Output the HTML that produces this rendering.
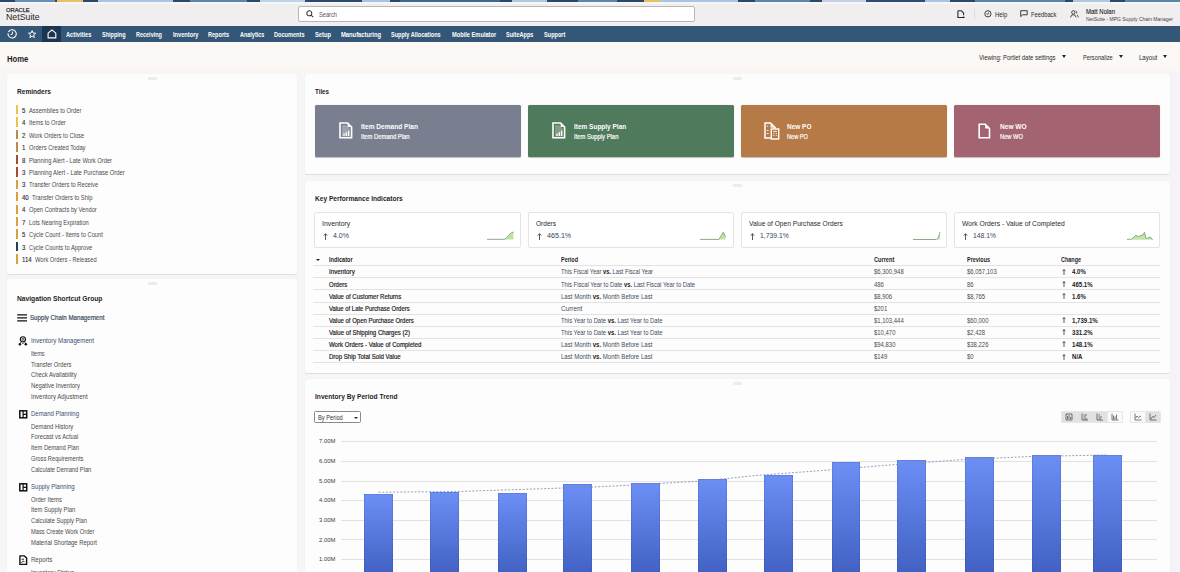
<!DOCTYPE html>
<html><head><meta charset="utf-8"><style>
html,body{margin:0;padding:0;width:1180px;height:572px;overflow:hidden;background:#f7f5f5}
body{position:relative;font-family:"Liberation Sans",sans-serif}
.t{position:absolute;white-space:nowrap;line-height:normal;transform-origin:0 0}
</style></head><body>
<div style="position:absolute;left:0px;top:0;width:15px;height:2px;background:#2a4868"></div>
<div style="position:absolute;left:15px;top:0;width:40px;height:2px;background:#6a8fb8"></div>
<div style="position:absolute;left:55px;top:0;width:2px;height:2px;background:#2a4868"></div>
<div style="position:absolute;left:57px;top:0;width:26px;height:2px;background:#e8c068"></div>
<div style="position:absolute;left:83px;top:0;width:15px;height:2px;background:#2a4868"></div>
<div style="position:absolute;left:98px;top:0;width:75px;height:2px;background:#a8c4e0"></div>
<div style="position:absolute;left:173px;top:0;width:17px;height:2px;background:#2a4868"></div>
<div style="position:absolute;left:190px;top:0;width:57px;height:2px;background:#5c88a8"></div>
<div style="position:absolute;left:247px;top:0;width:13px;height:2px;background:#2a4868"></div>
<div style="position:absolute;left:260px;top:0;width:45px;height:2px;background:#c0d4e8"></div>
<div style="position:absolute;left:305px;top:0;width:57px;height:2px;background:#2e4a6a"></div>
<div style="position:absolute;left:362px;top:0;width:28px;height:2px;background:#a8c4e0"></div>
<div style="position:absolute;left:390px;top:0;width:10px;height:2px;background:#2a4868"></div>
<div style="position:absolute;left:400px;top:0;width:100px;height:2px;background:#3f6892"></div>
<div style="position:absolute;left:500px;top:0;width:12px;height:2px;background:#2a4868"></div>
<div style="position:absolute;left:512px;top:0;width:35px;height:2px;background:#b0c8e0"></div>
<div style="position:absolute;left:547px;top:0;width:31px;height:2px;background:#2a4868"></div>
<div style="position:absolute;left:578px;top:0;width:39px;height:2px;background:#5c88a8"></div>
<div style="position:absolute;left:617px;top:0;width:27px;height:2px;background:#2a4868"></div>
<div style="position:absolute;left:644px;top:0;width:16px;height:2px;background:#e8c068"></div>
<div style="position:absolute;left:660px;top:0;width:78px;height:2px;background:#a8c4e0"></div>
<div style="position:absolute;left:738px;top:0;width:17px;height:2px;background:#2a4868"></div>
<div style="position:absolute;left:755px;top:0;width:55px;height:2px;background:#5c88a8"></div>
<div style="position:absolute;left:810px;top:0;width:12px;height:2px;background:#2a4868"></div>
<div style="position:absolute;left:822px;top:0;width:44px;height:2px;background:#c8d0e8"></div>
<div style="position:absolute;left:866px;top:0;width:59px;height:2px;background:#2e4a78"></div>
<div style="position:absolute;left:925px;top:0;width:25px;height:2px;background:#a8c4e0"></div>
<div style="position:absolute;left:950px;top:0;width:25px;height:2px;background:#2a4868"></div>
<div style="position:absolute;left:975px;top:0;width:90px;height:2px;background:#5a86a8"></div>
<div style="position:absolute;left:1065px;top:0;width:8px;height:2px;background:#2a4868"></div>
<div style="position:absolute;left:1073px;top:0;width:37px;height:2px;background:#b0c8e0"></div>
<div style="position:absolute;left:1110px;top:0;width:15px;height:2px;background:#2a4868"></div>
<div style="position:absolute;left:1125px;top:0;width:55px;height:2px;background:#5a86a8"></div>
<div style="position:absolute;left:0;top:2px;width:1180px;height:24px;background:#f0eeee"></div>
<div style="position:absolute;left:0;top:2px;width:1180px;height:2px;background:#f7f6f6"></div>
<div style="position:absolute;left:298px;top:6px;width:395px;height:14px;background:#fff;border:1px solid #b9b5b5;border-radius:2px"></div>
<svg style="position:absolute;left:305.5px;top:9.8px" width="8" height="8" viewBox="0 0 8 8"><circle cx="3.3" cy="3.3" r="2.5" fill="none" stroke="#3a3a3a" stroke-width="1.05"/><line x1="5.1" y1="5.1" x2="7.2" y2="7.2" stroke="#3a3a3a" stroke-width="1.1"/></svg>
<svg style="position:absolute;left:957px;top:9.6px" width="8" height="8.5" viewBox="0 0 8 8.5"><path d="M0.9 0.7 H4.3 L6.6 3 V5.2 M6 7.6 H0.9 V0.7" fill="none" stroke="#2a2a2a" stroke-width="1.1"/><circle cx="6.7" cy="7.3" r="0.9" fill="#111"/></svg>
<div style="position:absolute;left:973.5px;top:8.5px;width:0.8px;height:10.5px;background:#dcdada"></div>
<svg style="position:absolute;left:983.5px;top:9.8px" width="8" height="8" viewBox="0 0 8 8"><circle cx="3.9" cy="3.8" r="3.1" fill="none" stroke="#333" stroke-width="0.95"/><path d="M2.9 3.3 L3.8 4.6 L4.7 2.4" fill="none" stroke="#333" stroke-width="0.8"/></svg>
<svg style="position:absolute;left:1019.7px;top:10px" width="8" height="7.5" viewBox="0 0 8 7.5"><path d="M0.7 0.7 H7.2 V4.8 H2.6 L0.7 6.6 Z" fill="none" stroke="#333" stroke-width="0.95" stroke-linejoin="round"/></svg>
<svg style="position:absolute;left:1069.5px;top:10px" width="9" height="8" viewBox="0 0 9 8"><circle cx="3.3" cy="2.4" r="1.7" fill="none" stroke="#333" stroke-width="0.9"/><path d="M0.6 7.4 Q0.8 4.7 3.3 4.7 Q5.8 4.7 6 7.4" fill="none" stroke="#333" stroke-width="0.9"/><path d="M5.6 0.9 Q7.1 1.3 6.7 3.5 M7 4.9 Q8.3 5.5 8.3 7.4" fill="none" stroke="#333" stroke-width="0.8"/></svg>
<div style="position:absolute;left:0;top:26px;width:1180px;height:15.6px;background:#355777"></div>
<div style="position:absolute;left:41.8px;top:26px;width:19.2px;height:15.6px;background:#1d3650"></div>
<svg style="position:absolute;left:6.7px;top:29.2px" width="10" height="10" viewBox="0 0 10 10"><path d="M2.2 2 A4.1 4.1 0 1 1 1.1 4.2" fill="none" stroke="#fff" stroke-width="1.05"/><circle cx="1.9" cy="2.4" r="0.75" fill="#fff"/><path d="M3.6 5.6 L5.2 5.4 L5.6 2.6" fill="none" stroke="#fff" stroke-width="1"/></svg>
<svg style="position:absolute;left:27.6px;top:29.7px" width="9" height="9" viewBox="0 0 9 9"><path d="M4.1 0.6 L5.1 3 L7.7 3.2 L5.7 4.9 L6.3 7.5 L4.1 6.1 L1.9 7.5 L2.5 4.9 L0.5 3.2 L3.1 3 Z" fill="none" stroke="#fff" stroke-width="0.95" stroke-linejoin="round"/></svg>
<svg style="position:absolute;left:46.6px;top:29.2px" width="10" height="10" viewBox="0 0 10 10"><path d="M1.1 8.9 V4.2 L4.9 0.9 L8.8 4.2 V8.9 Z" fill="none" stroke="#fff" stroke-width="1.1" stroke-linejoin="round"/></svg>
<div style="position:absolute;left:0;top:42px;width:1180px;height:530px;background:#f7f5f5"></div>
<div style="position:absolute;left:0;top:41.6px;width:1180px;height:33px;background:linear-gradient(#fcf8f5 0,#fcf8f5 65%,#f8f5f5 100%)"></div>
<div style="position:absolute;left:1170px;top:72px;width:10px;height:500px;background:#f5f3f6"></div>
<div style="position:absolute;left:1062.3px;top:55.2px;width:0;height:0;border-left:2.2px solid transparent;border-right:2.2px solid transparent;border-top:3px solid #222"></div>
<div style="position:absolute;left:1118.8px;top:55.2px;width:0;height:0;border-left:2.2px solid transparent;border-right:2.2px solid transparent;border-top:3px solid #222"></div>
<div style="position:absolute;left:1163.4px;top:55.2px;width:0;height:0;border-left:2.2px solid transparent;border-right:2.2px solid transparent;border-top:3px solid #222"></div>
<div style="position:absolute;left:7px;top:74px;width:290px;height:199.5px;background:#fefdfd;border-radius:2px;box-shadow:0 0.5px 1px rgba(0,0,0,0.10)"></div>
<div style="position:absolute;left:147.5px;top:77px;width:9px;height:3px;background:#ececec;border-radius:1px"></div>
<div style="position:absolute;left:16px;top:105.00px;width:2.1px;height:9.4px;background:#eec24a"></div>
<div style="position:absolute;left:16px;top:117.44px;width:2.1px;height:9.4px;background:#eec24a"></div>
<div style="position:absolute;left:16px;top:129.88px;width:2.1px;height:9.4px;background:#b98c4b"></div>
<div style="position:absolute;left:16px;top:142.32px;width:2.1px;height:9.4px;background:#b98c4b"></div>
<div style="position:absolute;left:16px;top:154.76px;width:2.1px;height:9.4px;background:#a84a35"></div>
<div style="position:absolute;left:16px;top:167.20px;width:2.1px;height:9.4px;background:#a84a35"></div>
<div style="position:absolute;left:16px;top:179.64px;width:2.1px;height:9.4px;background:#d9a040"></div>
<div style="position:absolute;left:16px;top:192.08px;width:2.1px;height:9.4px;background:#d9a040"></div>
<div style="position:absolute;left:16px;top:204.52px;width:2.1px;height:9.4px;background:#d9a040"></div>
<div style="position:absolute;left:16px;top:216.96px;width:2.1px;height:9.4px;background:#d9a040"></div>
<div style="position:absolute;left:16px;top:229.40px;width:2.1px;height:9.4px;background:#d9a040"></div>
<div style="position:absolute;left:16px;top:241.84px;width:2.1px;height:9.4px;background:#22405e"></div>
<div style="position:absolute;left:16px;top:254.28px;width:2.1px;height:9.4px;background:#d9a040"></div>
<div style="position:absolute;left:7px;top:279px;width:290px;height:300px;background:#fefdfd;border-radius:2px;box-shadow:0 0.5px 1px rgba(0,0,0,0.10)"></div>
<div style="position:absolute;left:147.5px;top:282px;width:9px;height:3px;background:#ececec;border-radius:1px"></div>
<svg style="position:absolute;left:16.5px;top:314px" width="10" height="8" viewBox="0 0 10 8"><path d="M0.2 0.9 H10 M0.2 3.9 H10 M0.2 6.9 H10" stroke="#111" stroke-width="1.3"/></svg>
<svg style="position:absolute;left:18px;top:336px" width="10" height="10" viewBox="0 0 10 10"><circle cx="4.9" cy="3.3" r="2.6" fill="none" stroke="#111" stroke-width="1.1"/><circle cx="4.9" cy="3.3" r="1" fill="none" stroke="#222" stroke-width="0.8"/><path d="M3.2 5.6 L2.2 7.6 M6.6 5.6 L7.6 7.6" stroke="#222" stroke-width="0.8"/><circle cx="1.9" cy="8.3" r="1.25" fill="#111"/><circle cx="7.8" cy="8.3" r="1.25" fill="#111"/><circle cx="4.9" cy="7.4" r="0.6" fill="#222"/></svg>
<svg style="position:absolute;left:18.5px;top:409.5px" width="9" height="9" viewBox="0 0 9 9"><rect x="0.8" y="0.8" width="6.9" height="7" fill="none" stroke="#111" stroke-width="1.5"/><path d="M4.1 0.8 V7.8 M4.1 4.3 H7.7" stroke="#111" stroke-width="1.2"/></svg>
<svg style="position:absolute;left:18.5px;top:482.9px" width="9" height="9" viewBox="0 0 9 9"><rect x="0.8" y="0.8" width="6.9" height="7" fill="none" stroke="#111" stroke-width="1.5"/><path d="M4.1 0.8 V7.8 M4.1 4.3 H7.7" stroke="#111" stroke-width="1.2"/></svg>
<svg style="position:absolute;left:18.8px;top:554.9px" width="9" height="10.5" viewBox="0 0 9 10.5"><path d="M0.9 0.9 H5.4 L7.6 3.1 V9.4 H0.9 Z" fill="none" stroke="#111" stroke-width="1.4" stroke-linejoin="round"/><path d="M2.6 4.2 H5 M2.4 7.6 L4.2 6.2 L5.4 6.6" fill="none" stroke="#222" stroke-width="1"/></svg>
<div style="position:absolute;left:305px;top:74px;width:865px;height:100px;background:#fefdfd;border-radius:2px;box-shadow:0 0.5px 1px rgba(0,0,0,0.10)"></div>
<div style="position:absolute;left:733.0px;top:77px;width:9px;height:3px;background:#ececec;border-radius:1px"></div>
<div style="position:absolute;left:315px;top:105px;width:206px;height:51.8px;background:#7a7f8f;border-radius:1.5px;box-shadow:0 0.5px 1px rgba(0,0,0,0.25)"></div>
<svg style="position:absolute;left:338.6px;top:122.3px" width="14" height="17" viewBox="0 0 14 17"><path d="M3 3.2 H7.6 L10.9 7 V14.5 H3 Z" fill="rgba(255,255,255,0.28)"/><path d="M1 1 H8.6 L12.6 5 V15.8 H1 Z" fill="none" stroke="#fff" stroke-width="1.6" stroke-linejoin="miter"/><path d="M8.6 1 V5 H12.6" fill="rgba(255,255,255,0.9)"/><path d="M5 14 V11.6 M7.3 14 V10.2 M9.6 14 V8.8" stroke="#fff" stroke-width="1.3"/></svg>
<div style="position:absolute;left:528px;top:105px;width:206px;height:51.8px;background:#4f7a5c;border-radius:1.5px;box-shadow:0 0.5px 1px rgba(0,0,0,0.25)"></div>
<svg style="position:absolute;left:551.6px;top:122.3px" width="14" height="17" viewBox="0 0 14 17"><path d="M3 3.2 H7.6 L10.9 7 V14.5 H3 Z" fill="rgba(255,255,255,0.28)"/><path d="M1 1 H8.6 L12.6 5 V15.8 H1 Z" fill="none" stroke="#fff" stroke-width="1.6" stroke-linejoin="miter"/><path d="M8.6 1 V5 H12.6" fill="rgba(255,255,255,0.9)"/><path d="M5 14 V11.6 M7.3 14 V10.2 M9.6 14 V8.8" stroke="#fff" stroke-width="1.3"/></svg>
<div style="position:absolute;left:741px;top:105px;width:206px;height:51.8px;background:#b67a46;border-radius:1.5px;box-shadow:0 0.5px 1px rgba(0,0,0,0.25)"></div>
<svg style="position:absolute;left:763.5px;top:122.3px" width="16" height="18" viewBox="0 0 16 18"><path d="M6.5 1 L11.3 5.8 H6.5 Z" fill="rgba(235,250,255,0.9)"/><path d="M6.8 16 H1 V1 H6.5 L11.3 5.8 V6.4" fill="none" stroke="#fff" stroke-width="1.5"/><path d="M2.8 4.2 H4.2 M2.8 8.5 H4.6 M2.8 11.5 H4.6" stroke="#fff" stroke-width="0.9"/><rect x="7.3" y="7" width="7.4" height="10" fill="none" stroke="#fff" stroke-width="1.4"/><path d="M9.2 9.4 H12.8" stroke="#fff" stroke-width="0.9"/><path d="M9.4 11.6 h1 M11.8 11.6 h1 M9.4 13.5 h1 M11.8 13.5 h1" stroke="#fff" stroke-width="0.9"/></svg>
<div style="position:absolute;left:954px;top:105px;width:206px;height:51.8px;background:#a36370;border-radius:1.5px;box-shadow:0 0.5px 1px rgba(0,0,0,0.25)"></div>
<svg style="position:absolute;left:977.7px;top:123.2px" width="13" height="16" viewBox="0 0 13 16"><path d="M1.2 1.2 H7.2 L11.5 5.5 V14.7 H1.2 Z" fill="none" stroke="#fff" stroke-width="1.6"/><path d="M7.2 1.2 L11.5 5.5 H7.2 Z" fill="#fff"/></svg>
<div style="position:absolute;left:305px;top:181px;width:865px;height:192px;background:#fefdfd;border-radius:2px;box-shadow:0 0.5px 1px rgba(0,0,0,0.10)"></div>
<div style="position:absolute;left:733.0px;top:184px;width:9px;height:3px;background:#ececec;border-radius:1px"></div>
<div style="position:absolute;left:314px;top:212px;width:205px;height:34px;border:1px solid #e6e3e3;border-radius:2px;background:#fff"></div>
<svg style="position:absolute;left:322.5px;top:232.5px" width="5" height="7" viewBox="0 0 5 7"><path d="M2.5 7 V1 M0.8 2.6 L2.5 0.6 L4.2 2.6" fill="none" stroke="#444" stroke-width="0.9"/></svg>
<svg style="position:absolute;left:487px;top:231px;overflow:visible" width="28" height="10" viewBox="0 0 28 10"><path d="M17 8.3 C20 8.3 21 2.5 26.5 1 V8.5 H17 Z" fill="#a8dc8c" opacity="0.75"/><path d="M0 8.3 H17 C20 8.3 21 2.5 26.5 1" fill="none" stroke="#8fa888" stroke-width="1"/></svg>
<div style="position:absolute;left:528px;top:212px;width:204px;height:34px;border:1px solid #e6e3e3;border-radius:2px;background:#fff"></div>
<svg style="position:absolute;left:536.5px;top:232.5px" width="5" height="7" viewBox="0 0 5 7"><path d="M2.5 7 V1 M0.8 2.6 L2.5 0.6 L4.2 2.6" fill="none" stroke="#444" stroke-width="0.9"/></svg>
<svg style="position:absolute;left:701px;top:231px;overflow:visible" width="28" height="10" viewBox="0 0 28 10"><path d="M18 8.4 L22.3 1.2 L24.5 6 V8.5 H18 Z" fill="#a8dc8c" opacity="0.75"/><path d="M-1 8.4 H18 L22.3 1.2 L24.5 6" fill="none" stroke="#8fa888" stroke-width="1"/></svg>
<div style="position:absolute;left:741px;top:212px;width:204px;height:34px;border:1px solid #e6e3e3;border-radius:2px;background:#fff"></div>
<svg style="position:absolute;left:749.5px;top:232.5px" width="5" height="7" viewBox="0 0 5 7"><path d="M2.5 7 V1 M0.8 2.6 L2.5 0.6 L4.2 2.6" fill="none" stroke="#444" stroke-width="0.9"/></svg>
<svg style="position:absolute;left:914px;top:231px;overflow:visible" width="28" height="10" viewBox="0 0 28 10"><path d="M22 8.5 C24 8.5 25 5 26 1 V8.6 H22 Z" fill="#a8dc8c" opacity="0.75"/><path d="M-1 8.5 H22 C24 8.5 25 5 26 1" fill="none" stroke="#8fa888" stroke-width="1"/></svg>
<div style="position:absolute;left:954px;top:212px;width:204px;height:34px;border:1px solid #e6e3e3;border-radius:2px;background:#fff"></div>
<svg style="position:absolute;left:962.5px;top:232.5px" width="5" height="7" viewBox="0 0 5 7"><path d="M2.5 7 V1 M0.8 2.6 L2.5 0.6 L4.2 2.6" fill="none" stroke="#444" stroke-width="0.9"/></svg>
<svg style="position:absolute;left:1127px;top:231px;overflow:visible" width="28" height="10" viewBox="0 0 28 10"><path d="M4.5 8.2 L7 6 L8.5 4.5 L12 5.5 L14 4.4 L16 3.8 L17.5 1.2 L18.8 6.8 L20 7.3 L23.5 6.2 L25.6 8.8 H4.5 Z" fill="#a8dc8c" opacity="0.75"/><path d="M0 8.4 L4.5 8.2 L7 6 L8.5 4.5 L12 5.5 L14 4.4 L16 3.8 L17.5 1.2 L18.8 6.8 L20 7.3 L23.5 6.2 L25.6 8.8" fill="none" stroke="#8fa888" stroke-width="1"/></svg>
<div style="position:absolute;left:316.3px;top:258.6px;width:0;height:0;border-left:2px solid transparent;border-right:2px solid transparent;border-top:2.6px solid #222"></div>
<div style="position:absolute;left:313px;top:265.20px;width:847px;height:0.8px;background:#e4e2e2"></div>
<div style="position:absolute;left:313px;top:277.34px;width:847px;height:0.8px;background:#e4e2e2"></div>
<div style="position:absolute;left:313px;top:289.48px;width:847px;height:0.8px;background:#e4e2e2"></div>
<div style="position:absolute;left:313px;top:301.62px;width:847px;height:0.8px;background:#e4e2e2"></div>
<div style="position:absolute;left:313px;top:313.76px;width:847px;height:0.8px;background:#e4e2e2"></div>
<div style="position:absolute;left:313px;top:325.90px;width:847px;height:0.8px;background:#e4e2e2"></div>
<div style="position:absolute;left:313px;top:338.04px;width:847px;height:0.8px;background:#e4e2e2"></div>
<div style="position:absolute;left:313px;top:350.18px;width:847px;height:0.8px;background:#e4e2e2"></div>
<div style="position:absolute;left:313px;top:362.32px;width:847px;height:0.8px;background:#e4e2e2"></div>
<svg style="position:absolute;left:1061.5px;top:268.60px" width="4" height="6" viewBox="0 0 4 6"><path d="M2 6 V0.8 M0.6 2.2 L2 0.5 L3.4 2.2" fill="none" stroke="#333" stroke-width="0.8"/></svg>
<svg style="position:absolute;left:1061.5px;top:280.74px" width="4" height="6" viewBox="0 0 4 6"><path d="M2 6 V0.8 M0.6 2.2 L2 0.5 L3.4 2.2" fill="none" stroke="#333" stroke-width="0.8"/></svg>
<svg style="position:absolute;left:1061.5px;top:292.88px" width="4" height="6" viewBox="0 0 4 6"><path d="M2 6 V0.8 M0.6 2.2 L2 0.5 L3.4 2.2" fill="none" stroke="#333" stroke-width="0.8"/></svg>
<svg style="position:absolute;left:1061.5px;top:317.16px" width="4" height="6" viewBox="0 0 4 6"><path d="M2 6 V0.8 M0.6 2.2 L2 0.5 L3.4 2.2" fill="none" stroke="#333" stroke-width="0.8"/></svg>
<svg style="position:absolute;left:1061.5px;top:329.30px" width="4" height="6" viewBox="0 0 4 6"><path d="M2 6 V0.8 M0.6 2.2 L2 0.5 L3.4 2.2" fill="none" stroke="#333" stroke-width="0.8"/></svg>
<svg style="position:absolute;left:1061.5px;top:341.44px" width="4" height="6" viewBox="0 0 4 6"><path d="M2 6 V0.8 M0.6 2.2 L2 0.5 L3.4 2.2" fill="none" stroke="#333" stroke-width="0.8"/></svg>
<svg style="position:absolute;left:1061.5px;top:353.58px" width="4" height="6" viewBox="0 0 4 6"><path d="M2 6 V0.8 M0.6 2.2 L2 0.5 L3.4 2.2" fill="none" stroke="#333" stroke-width="0.8"/></svg>
<div style="position:absolute;left:305px;top:379px;width:865px;height:200px;background:#fefdfd;border-radius:2px;box-shadow:0 0.5px 1px rgba(0,0,0,0.10)"></div>
<div style="position:absolute;left:733.0px;top:382px;width:9px;height:3px;background:#ececec;border-radius:1px"></div>
<div style="position:absolute;left:314px;top:411.4px;width:45px;height:9.5px;border:1px solid #8a8a8a;border-radius:1.5px;background:#fff"></div>
<div style="position:absolute;left:353.5px;top:416.8px;width:0;height:0;border-left:2.2px solid transparent;border-right:2.2px solid transparent;border-top:2.8px solid #222"></div>
<div style="position:absolute;left:1061px;top:411px;width:61.5px;height:11.5px;background:#e8e6e8;border-radius:1px"></div>
<div style="position:absolute;left:1130px;top:411px;width:30.5px;height:11.5px;background:#e8e6e8;border-radius:1px"></div>
<div style="position:absolute;left:1061.8px;top:411.5px;width:14.5px;height:10.5px;background:#e2e0e2"></div>
<div style="position:absolute;left:1077.1px;top:411.5px;width:14.5px;height:10.5px;background:#e2e0e2"></div>
<div style="position:absolute;left:1092.4px;top:411.5px;width:14.5px;height:10.5px;background:#e2e0e2"></div>
<div style="position:absolute;left:1107.5px;top:411.5px;width:14.5px;height:10.5px;background:#fafafa"></div>
<div style="position:absolute;left:1130.5px;top:411.5px;width:14.5px;height:10.5px;background:#fafafa"></div>
<div style="position:absolute;left:1145.7px;top:411.5px;width:14.5px;height:10.5px;background:#e2e0e2"></div>
<svg style="position:absolute;left:1065.3px;top:413px" width="8" height="8" viewBox="0 0 8 8"><path d="M1 1 V7 H7 M2.5 6 V3 M4 6 V2 M5.5 6 V4 M1 1 H7 V7" fill="none" stroke="#555" stroke-width="0.8"/></svg>
<svg style="position:absolute;left:1080.6px;top:413px" width="8" height="8" viewBox="0 0 8 8"><path d="M1 0.5 V7 H7 M2.5 2 H6 M2.5 4 H5 M2.5 6 H6.5" fill="none" stroke="#555" stroke-width="0.8"/></svg>
<svg style="position:absolute;left:1095.9px;top:413px" width="8" height="8" viewBox="0 0 8 8"><path d="M1 0.5 V7 H7 M2.5 2 H4 M2.5 4 H6 M2.5 6 H5" fill="none" stroke="#555" stroke-width="0.8"/></svg>
<svg style="position:absolute;left:1111px;top:413px" width="8" height="8" viewBox="0 0 8 8"><path d="M1 0.5 V7 H7.5 M2.5 6.5 V2.5 M4 6.5 V3.5 M5.5 6.5 V1.5" fill="none" stroke="#555" stroke-width="0.8"/></svg>
<svg style="position:absolute;left:1134px;top:413px" width="8" height="8" viewBox="0 0 8 8"><path d="M1 0.5 V7 H7.5 M1.5 5 L3 3 L4.5 4.5 L7 3" fill="none" stroke="#555" stroke-width="0.8"/></svg>
<svg style="position:absolute;left:1149.2px;top:413px" width="8" height="8" viewBox="0 0 8 8"><path d="M1 0.5 V7 H7.5 M2 6 L3.5 3.5 L5 4.5 L7 2" fill="none" stroke="#555" stroke-width="0.8"/></svg>
<div style="position:absolute;left:341px;top:440.70px;width:816px;height:1px;background:#e2e2e2"></div>
<div style="position:absolute;left:341px;top:461.00px;width:816px;height:1px;background:#e2e2e2"></div>
<div style="position:absolute;left:341px;top:480.60px;width:816px;height:1px;background:#e2e2e2"></div>
<div style="position:absolute;left:341px;top:500.20px;width:816px;height:1px;background:#e2e2e2"></div>
<div style="position:absolute;left:341px;top:519.80px;width:816px;height:1px;background:#e2e2e2"></div>
<div style="position:absolute;left:341px;top:539.40px;width:816px;height:1px;background:#e2e2e2"></div>
<div style="position:absolute;left:341px;top:559.30px;width:816px;height:1px;background:#e2e2e2"></div>
<div style="position:absolute;left:364.4px;top:493.6px;width:29.0px;height:85.4px;background:linear-gradient(#6c8ff6,#3f5fc0);box-shadow:inset 0 0 0 0.5px rgba(40,60,140,0.35)"></div>
<div style="position:absolute;left:430px;top:491.9px;width:29.2px;height:87.1px;background:linear-gradient(#6c8ff6,#3f5fc0);box-shadow:inset 0 0 0 0.5px rgba(40,60,140,0.35)"></div>
<div style="position:absolute;left:497.5px;top:492.5px;width:29.1px;height:86.5px;background:linear-gradient(#6c8ff6,#3f5fc0);box-shadow:inset 0 0 0 0.5px rgba(40,60,140,0.35)"></div>
<div style="position:absolute;left:562.9px;top:484.4px;width:29.1px;height:94.6px;background:linear-gradient(#6c8ff6,#3f5fc0);box-shadow:inset 0 0 0 0.5px rgba(40,60,140,0.35)"></div>
<div style="position:absolute;left:630.7px;top:483.4px;width:29.1px;height:95.6px;background:linear-gradient(#6c8ff6,#3f5fc0);box-shadow:inset 0 0 0 0.5px rgba(40,60,140,0.35)"></div>
<div style="position:absolute;left:698px;top:478.6px;width:29.0px;height:100.4px;background:linear-gradient(#6c8ff6,#3f5fc0);box-shadow:inset 0 0 0 0.5px rgba(40,60,140,0.35)"></div>
<div style="position:absolute;left:763.7px;top:475.3px;width:29.2px;height:103.7px;background:linear-gradient(#6c8ff6,#3f5fc0);box-shadow:inset 0 0 0 0.5px rgba(40,60,140,0.35)"></div>
<div style="position:absolute;left:831.5px;top:461.7px;width:28.8px;height:117.3px;background:linear-gradient(#6c8ff6,#3f5fc0);box-shadow:inset 0 0 0 0.5px rgba(40,60,140,0.35)"></div>
<div style="position:absolute;left:897px;top:460px;width:29.0px;height:119.0px;background:linear-gradient(#6c8ff6,#3f5fc0);box-shadow:inset 0 0 0 0.5px rgba(40,60,140,0.35)"></div>
<div style="position:absolute;left:964.7px;top:457px;width:29.2px;height:122.0px;background:linear-gradient(#6c8ff6,#3f5fc0);box-shadow:inset 0 0 0 0.5px rgba(40,60,140,0.35)"></div>
<div style="position:absolute;left:1032.2px;top:455px;width:29.2px;height:124.0px;background:linear-gradient(#6c8ff6,#3f5fc0);box-shadow:inset 0 0 0 0.5px rgba(40,60,140,0.35)"></div>
<div style="position:absolute;left:1093.2px;top:454.8px;width:29.1px;height:124.2px;background:linear-gradient(#6c8ff6,#3f5fc0);box-shadow:inset 0 0 0 0.5px rgba(40,60,140,0.35)"></div>
<svg style="position:absolute;left:300px;top:430px" width="870" height="80" viewBox="0 0 870 80"><path d="M78.60000000000002,62.30000000000001 L161.7,61.39999999999998 L258.29999999999995,58.19999999999999 L294,57 L328,55.30000000000001 L362,53.30000000000001 L396,51.39999999999998 L430,48.19999999999999 L459,45.19999999999999 L527.8,40.10000000000002 L595.6,34.5 L658.3,29.899999999999977 L727.8,26.600000000000023 L790.5,25.30000000000001 L808,25" fill="none" stroke="#7f86b0" stroke-width="0.8" stroke-dasharray="2,1.6"/></svg>
<div class="t" style="left:6.30px;top:7.07px;font-size:5.2px;font-weight:400;color:#333;transform:scaleX(1.1104);-webkit-text-stroke:0.25px #333">ORACLE</div>
<div class="t" style="left:6.30px;top:11.05px;font-size:9.9px;font-weight:400;color:#262626;transform:scaleX(0.8894);">NetSuite</div>
<div class="t" style="left:318.80px;top:10.77px;font-size:6.6px;font-weight:400;color:#555;transform:scaleX(0.8610);">Search</div>
<div class="t" style="left:994.80px;top:10.83px;font-size:6.3px;font-weight:400;color:#2a2a2a;transform:scaleX(0.9419);">Help</div>
<div class="t" style="left:1031.40px;top:10.83px;font-size:6.3px;font-weight:400;color:#2a2a2a;transform:scaleX(0.9184);">Feedback</div>
<div class="t" style="left:1086.00px;top:7.61px;font-size:6.4px;font-weight:400;color:#222;transform:scaleX(0.9383);-webkit-text-stroke:0.1px #222">Matt Nolan</div>
<div class="t" style="left:1086.00px;top:15.54px;font-size:5.8px;font-weight:400;color:#444;transform:scaleX(0.8599);">NetSuite - MPG Supply Chain Manager</div>
<div class="t" style="left:66.40px;top:31.02px;font-size:6.8px;font-weight:700;color:#ffffff;transform:scaleX(0.8368);">Activities</div>
<div class="t" style="left:101.90px;top:31.02px;font-size:6.8px;font-weight:700;color:#ffffff;transform:scaleX(0.8116);">Shipping</div>
<div class="t" style="left:135.90px;top:31.02px;font-size:6.8px;font-weight:700;color:#ffffff;transform:scaleX(0.8066);">Receiving</div>
<div class="t" style="left:172.50px;top:31.02px;font-size:6.8px;font-weight:700;color:#ffffff;transform:scaleX(0.8335);">Inventory</div>
<div class="t" style="left:207.90px;top:31.02px;font-size:6.8px;font-weight:700;color:#ffffff;transform:scaleX(0.8175);">Reports</div>
<div class="t" style="left:239.50px;top:31.02px;font-size:6.8px;font-weight:700;color:#ffffff;transform:scaleX(0.8037);">Analytics</div>
<div class="t" style="left:274.20px;top:31.02px;font-size:6.8px;font-weight:700;color:#ffffff;transform:scaleX(0.8240);">Documents</div>
<div class="t" style="left:315.00px;top:31.02px;font-size:6.8px;font-weight:700;color:#ffffff;transform:scaleX(0.8470);">Setup</div>
<div class="t" style="left:341.00px;top:31.02px;font-size:6.8px;font-weight:700;color:#ffffff;transform:scaleX(0.8542);">Manufacturing</div>
<div class="t" style="left:391.30px;top:31.02px;font-size:6.8px;font-weight:700;color:#ffffff;transform:scaleX(0.8139);">Supply Allocations</div>
<div class="t" style="left:451.50px;top:31.02px;font-size:6.8px;font-weight:700;color:#ffffff;transform:scaleX(0.8359);">Mobile Emulator</div>
<div class="t" style="left:506.00px;top:31.02px;font-size:6.8px;font-weight:700;color:#ffffff;transform:scaleX(0.8149);">SuiteApps</div>
<div class="t" style="left:543.60px;top:31.02px;font-size:6.8px;font-weight:700;color:#ffffff;transform:scaleX(0.8211);">Support</div>
<div class="t" style="left:6.80px;top:53.80px;font-size:8.3px;font-weight:700;color:#1e1e1e;transform:scaleX(0.9236);">Home</div>
<div class="t" style="left:979.30px;top:53.61px;font-size:6.4px;font-weight:400;color:#2a2a2a;transform:scaleX(0.9294);">Viewing: Portlet date settings</div>
<div class="t" style="left:1082.50px;top:53.61px;font-size:6.4px;font-weight:400;color:#2a2a2a;transform:scaleX(0.8920);">Personalize</div>
<div class="t" style="left:1139.00px;top:53.61px;font-size:6.4px;font-weight:400;color:#2a2a2a;transform:scaleX(0.9478);">Layout</div>
<div class="t" style="left:16.80px;top:87.19px;font-size:7.4px;font-weight:700;color:#1e1e1e;transform:scaleX(0.8874);">Reminders</div>
<div class="t" style="left:21.80px;top:106.85px;font-size:6.7px;font-weight:400;color:#2a2a2a;transform:scaleX(0.9);-webkit-text-stroke:0.12px #2a2a2a">5</div>
<div class="t" style="left:28.80px;top:106.85px;font-size:6.7px;font-weight:400;color:#4a4a4a;transform:scaleX(0.8648);">Assemblies to Order</div>
<div class="t" style="left:21.80px;top:119.29px;font-size:6.7px;font-weight:400;color:#2a2a2a;transform:scaleX(0.9);-webkit-text-stroke:0.12px #2a2a2a">4</div>
<div class="t" style="left:28.80px;top:119.29px;font-size:6.7px;font-weight:400;color:#4a4a4a;transform:scaleX(0.86);">Items to Order</div>
<div class="t" style="left:21.80px;top:131.73px;font-size:6.7px;font-weight:400;color:#2a2a2a;transform:scaleX(0.9);-webkit-text-stroke:0.12px #2a2a2a">2</div>
<div class="t" style="left:28.80px;top:131.73px;font-size:6.7px;font-weight:400;color:#4a4a4a;transform:scaleX(0.86);">Work Orders to Close</div>
<div class="t" style="left:21.80px;top:144.17px;font-size:6.7px;font-weight:400;color:#2a2a2a;transform:scaleX(0.9);-webkit-text-stroke:0.12px #2a2a2a">1</div>
<div class="t" style="left:28.80px;top:144.17px;font-size:6.7px;font-weight:400;color:#4a4a4a;transform:scaleX(0.86);">Orders Created Today</div>
<div class="t" style="left:21.80px;top:156.61px;font-size:6.7px;font-weight:400;color:#2a2a2a;transform:scaleX(0.9);-webkit-text-stroke:0.12px #2a2a2a">8</div>
<div class="t" style="left:28.80px;top:156.61px;font-size:6.7px;font-weight:400;color:#4a4a4a;transform:scaleX(0.86);">Planning Alert - Late Work Order</div>
<div class="t" style="left:21.80px;top:169.05px;font-size:6.7px;font-weight:400;color:#2a2a2a;transform:scaleX(0.9);-webkit-text-stroke:0.12px #2a2a2a">3</div>
<div class="t" style="left:28.80px;top:169.05px;font-size:6.7px;font-weight:400;color:#4a4a4a;transform:scaleX(0.8765);">Planning Alert - Late Purchase Order</div>
<div class="t" style="left:21.80px;top:181.49px;font-size:6.7px;font-weight:400;color:#2a2a2a;transform:scaleX(0.9);-webkit-text-stroke:0.12px #2a2a2a">3</div>
<div class="t" style="left:28.80px;top:181.49px;font-size:6.7px;font-weight:400;color:#4a4a4a;transform:scaleX(0.86);">Transfer Orders to Receive</div>
<div class="t" style="left:21.80px;top:193.93px;font-size:6.7px;font-weight:400;color:#2a2a2a;transform:scaleX(0.9);-webkit-text-stroke:0.12px #2a2a2a">40</div>
<div class="t" style="left:32.30px;top:193.93px;font-size:6.7px;font-weight:400;color:#4a4a4a;transform:scaleX(0.8689);">Transfer Orders to Ship</div>
<div class="t" style="left:21.80px;top:206.37px;font-size:6.7px;font-weight:400;color:#2a2a2a;transform:scaleX(0.9);-webkit-text-stroke:0.12px #2a2a2a">4</div>
<div class="t" style="left:28.80px;top:206.37px;font-size:6.7px;font-weight:400;color:#4a4a4a;transform:scaleX(0.86);">Open Contracts by Vendor</div>
<div class="t" style="left:21.80px;top:218.81px;font-size:6.7px;font-weight:400;color:#2a2a2a;transform:scaleX(0.9);-webkit-text-stroke:0.12px #2a2a2a">7</div>
<div class="t" style="left:28.80px;top:218.81px;font-size:6.7px;font-weight:400;color:#4a4a4a;transform:scaleX(0.86);">Lots Nearing Expiration</div>
<div class="t" style="left:21.80px;top:231.25px;font-size:6.7px;font-weight:400;color:#2a2a2a;transform:scaleX(0.9);-webkit-text-stroke:0.12px #2a2a2a">5</div>
<div class="t" style="left:28.80px;top:231.25px;font-size:6.7px;font-weight:400;color:#4a4a4a;transform:scaleX(0.86);">Cycle Count - Items to Count</div>
<div class="t" style="left:21.80px;top:243.69px;font-size:6.7px;font-weight:400;color:#2a2a2a;transform:scaleX(0.9);-webkit-text-stroke:0.12px #2a2a2a">3</div>
<div class="t" style="left:28.80px;top:243.69px;font-size:6.7px;font-weight:400;color:#4a4a4a;transform:scaleX(0.86);">Cycle Counts to Approve</div>
<div class="t" style="left:21.80px;top:256.13px;font-size:6.7px;font-weight:400;color:#2a2a2a;transform:scaleX(0.9);-webkit-text-stroke:0.12px #2a2a2a">114</div>
<div class="t" style="left:35.30px;top:256.13px;font-size:6.7px;font-weight:400;color:#4a4a4a;transform:scaleX(0.8557);">Work Orders - Released</div>
<div class="t" style="left:16.60px;top:294.39px;font-size:7.4px;font-weight:700;color:#1e1e1e;transform:scaleX(0.9043);">Navigation Shortcut Group</div>
<div class="t" style="left:30.20px;top:313.57px;font-size:6.6px;font-weight:400;color:#3e4d5e;transform:scaleX(0.9353);-webkit-text-stroke:0.2px #3e4d5e">Supply Chain Management</div>
<div class="t" style="left:31.20px;top:336.62px;font-size:6.8px;font-weight:400;color:#3a5070;transform:scaleX(0.9061);">Inventory Management</div>
<div class="t" style="left:31.20px;top:350.02px;font-size:6.8px;font-weight:400;color:#4a4a4a;transform:scaleX(0.8180);">Items</div>
<div class="t" style="left:31.20px;top:360.74px;font-size:6.8px;font-weight:400;color:#4a4a4a;transform:scaleX(0.8487);">Transfer Orders</div>
<div class="t" style="left:31.20px;top:371.46px;font-size:6.8px;font-weight:400;color:#4a4a4a;transform:scaleX(0.8661);">Check Availability</div>
<div class="t" style="left:31.20px;top:382.18px;font-size:6.8px;font-weight:400;color:#4a4a4a;transform:scaleX(0.8629);">Negative Inventory</div>
<div class="t" style="left:31.20px;top:392.90px;font-size:6.8px;font-weight:400;color:#4a4a4a;transform:scaleX(0.8916);">Inventory Adjustment</div>
<div class="t" style="left:31.20px;top:409.52px;font-size:6.8px;font-weight:400;color:#3a5070;transform:scaleX(0.8900);">Demand Planning</div>
<div class="t" style="left:31.20px;top:422.62px;font-size:6.8px;font-weight:400;color:#4a4a4a;transform:scaleX(0.8680);">Demand History</div>
<div class="t" style="left:31.20px;top:433.47px;font-size:6.8px;font-weight:400;color:#4a4a4a;transform:scaleX(0.8500);">Forecast vs Actual</div>
<div class="t" style="left:31.20px;top:444.32px;font-size:6.8px;font-weight:400;color:#4a4a4a;transform:scaleX(0.8526);">Item Demand Plan</div>
<div class="t" style="left:31.20px;top:455.17px;font-size:6.8px;font-weight:400;color:#4a4a4a;transform:scaleX(0.8407);">Gross Requirements</div>
<div class="t" style="left:31.20px;top:466.02px;font-size:6.8px;font-weight:400;color:#4a4a4a;transform:scaleX(0.8443);">Calculate Demand Plan</div>
<div class="t" style="left:31.20px;top:482.82px;font-size:6.8px;font-weight:400;color:#3a5070;transform:scaleX(0.8896);">Supply Planning</div>
<div class="t" style="left:31.20px;top:495.72px;font-size:6.8px;font-weight:400;color:#4a4a4a;transform:scaleX(0.8582);">Order Items</div>
<div class="t" style="left:31.20px;top:506.47px;font-size:6.8px;font-weight:400;color:#4a4a4a;transform:scaleX(0.8601);">Item Supply Plan</div>
<div class="t" style="left:31.20px;top:517.22px;font-size:6.8px;font-weight:400;color:#4a4a4a;transform:scaleX(0.8406);">Calculate Supply Plan</div>
<div class="t" style="left:31.20px;top:527.97px;font-size:6.8px;font-weight:400;color:#4a4a4a;transform:scaleX(0.8406);">Mass Create Work Order</div>
<div class="t" style="left:31.20px;top:538.72px;font-size:6.8px;font-weight:400;color:#4a4a4a;transform:scaleX(0.8691);">Material Shortage Report</div>
<div class="t" style="left:30.80px;top:555.72px;font-size:6.8px;font-weight:400;color:#4a4a4a;transform:scaleX(0.8903);">Reports</div>
<div class="t" style="left:31.20px;top:568.82px;font-size:6.8px;font-weight:400;color:#4a4a4a;transform:scaleX(0.8753);">Inventory Status</div>
<div class="t" style="left:315.00px;top:87.19px;font-size:7.4px;font-weight:700;color:#1e1e1e;transform:scaleX(0.8374);">Tiles</div>
<div class="t" style="left:360.80px;top:123.08px;font-size:7.0px;font-weight:700;color:#ffffff;transform:scaleX(0.9392);">Item Demand Plan</div>
<div class="t" style="left:360.80px;top:133.39px;font-size:6.5px;font-weight:400;color:#f8f8f8;transform:scaleX(0.9008);-webkit-text-stroke:0.22px #f8f8f8">Item Demand Plan</div>
<div class="t" style="left:573.80px;top:123.08px;font-size:7.0px;font-weight:700;color:#ffffff;transform:scaleX(0.9254);">Item Supply Plan</div>
<div class="t" style="left:573.80px;top:133.39px;font-size:6.5px;font-weight:400;color:#f8f8f8;transform:scaleX(0.9035);-webkit-text-stroke:0.22px #f8f8f8">Item Supply Plan</div>
<div class="t" style="left:786.80px;top:123.08px;font-size:7.0px;font-weight:700;color:#ffffff;transform:scaleX(0.9224);">New PO</div>
<div class="t" style="left:786.80px;top:133.39px;font-size:6.5px;font-weight:400;color:#f8f8f8;transform:scaleX(0.8677);-webkit-text-stroke:0.22px #f8f8f8">New PO</div>
<div class="t" style="left:999.80px;top:123.08px;font-size:7.0px;font-weight:700;color:#ffffff;transform:scaleX(0.9405);">New WO</div>
<div class="t" style="left:999.80px;top:133.39px;font-size:6.5px;font-weight:400;color:#f8f8f8;transform:scaleX(0.8808);-webkit-text-stroke:0.22px #f8f8f8">New WO</div>
<div class="t" style="left:314.50px;top:194.27px;font-size:7.5px;font-weight:700;color:#1e1e1e;transform:scaleX(0.8803);">Key Performance Indicators</div>
<div class="t" style="left:321.80px;top:220.00px;font-size:6.9px;font-weight:400;color:#2a2a2a;transform:scaleX(0.9985);">Inventory</div>
<div class="t" style="left:333.00px;top:232.10px;font-size:6.9px;font-weight:400;color:#34465c;transform:scaleX(1.0179);">4.0%</div>
<div class="t" style="left:535.80px;top:220.00px;font-size:6.9px;font-weight:400;color:#2a2a2a;transform:scaleX(0.9543);">Orders</div>
<div class="t" style="left:547.00px;top:232.10px;font-size:6.9px;font-weight:400;color:#34465c;transform:scaleX(1.0353);">465.1%</div>
<div class="t" style="left:748.80px;top:220.00px;font-size:6.9px;font-weight:400;color:#2a2a2a;transform:scaleX(0.9626);">Value of Open Purchase Orders</div>
<div class="t" style="left:760.00px;top:232.10px;font-size:6.9px;font-weight:400;color:#34465c;transform:scaleX(0.9854);">1,739.1%</div>
<div class="t" style="left:961.80px;top:220.00px;font-size:6.9px;font-weight:400;color:#2a2a2a;transform:scaleX(0.9775);">Work Orders - Value of Completed</div>
<div class="t" style="left:973.00px;top:232.10px;font-size:6.9px;font-weight:400;color:#34465c;transform:scaleX(0.9797);">148.1%</div>
<div class="t" style="left:329.30px;top:256.13px;font-size:6.3px;font-weight:700;color:#1e1e1e;transform:scaleX(0.8912);">Indicator</div>
<div class="t" style="left:560.80px;top:256.13px;font-size:6.3px;font-weight:700;color:#1e1e1e;transform:scaleX(0.8669);">Period</div>
<div class="t" style="left:873.80px;top:256.13px;font-size:6.3px;font-weight:700;color:#1e1e1e;transform:scaleX(0.8923);">Current</div>
<div class="t" style="left:967.20px;top:256.13px;font-size:6.3px;font-weight:700;color:#1e1e1e;transform:scaleX(0.8644);">Previous</div>
<div class="t" style="left:1061.00px;top:256.13px;font-size:6.3px;font-weight:700;color:#1e1e1e;transform:scaleX(0.8704);">Change</div>
<div class="t" style="left:329.30px;top:268.43px;font-size:6.3px;font-weight:400;color:#222;transform:scaleX(0.9959);-webkit-text-stroke:0.18px #222">Inventory</div>
<div class="t" style="left:560.80px;top:268.37px;font-size:6.6px;font-weight:400;color:#3c4c60;transform:scaleX(0.8684);">This Fiscal Year <b style="color:#222">vs.</b> Last Fiscal Year</div>
<div class="t" style="left:873.80px;top:268.37px;font-size:6.6px;font-weight:400;color:#4a4a4a;transform:scaleX(0.9);">$6,300,948</div>
<div class="t" style="left:967.20px;top:268.37px;font-size:6.6px;font-weight:400;color:#4a4a4a;transform:scaleX(0.9);">$6,057,103</div>
<div class="t" style="left:1071.50px;top:268.41px;font-size:6.4px;font-weight:700;color:#222;transform:scaleX(0.95);">4.0%</div>
<div class="t" style="left:329.30px;top:280.57px;font-size:6.3px;font-weight:400;color:#222;transform:scaleX(0.9455);-webkit-text-stroke:0.18px #222">Orders</div>
<div class="t" style="left:560.80px;top:280.51px;font-size:6.6px;font-weight:400;color:#3c4c60;transform:scaleX(0.8809);">This Fiscal Year to Date <b style="color:#222">vs.</b> Last Fiscal Year to Date</div>
<div class="t" style="left:873.80px;top:280.51px;font-size:6.6px;font-weight:400;color:#4a4a4a;transform:scaleX(0.9);">486</div>
<div class="t" style="left:967.20px;top:280.51px;font-size:6.6px;font-weight:400;color:#4a4a4a;transform:scaleX(0.9);">86</div>
<div class="t" style="left:1071.50px;top:280.55px;font-size:6.4px;font-weight:700;color:#222;transform:scaleX(0.95);">465.1%</div>
<div class="t" style="left:329.30px;top:292.71px;font-size:6.3px;font-weight:400;color:#222;transform:scaleX(0.9565);-webkit-text-stroke:0.18px #222">Value of Customer Returns</div>
<div class="t" style="left:560.80px;top:292.65px;font-size:6.6px;font-weight:400;color:#3c4c60;transform:scaleX(0.9200);">Last Month <b style="color:#222">vs.</b> Month Before Last</div>
<div class="t" style="left:873.80px;top:292.65px;font-size:6.6px;font-weight:400;color:#4a4a4a;transform:scaleX(0.9);">$8,906</div>
<div class="t" style="left:967.20px;top:292.65px;font-size:6.6px;font-weight:400;color:#4a4a4a;transform:scaleX(0.9);">$8,765</div>
<div class="t" style="left:1071.50px;top:292.69px;font-size:6.4px;font-weight:700;color:#222;transform:scaleX(0.95);">1.6%</div>
<div class="t" style="left:329.30px;top:304.85px;font-size:6.3px;font-weight:400;color:#222;transform:scaleX(0.9372);-webkit-text-stroke:0.18px #222">Value of Late Purchase Orders</div>
<div class="t" style="left:560.80px;top:304.79px;font-size:6.6px;font-weight:400;color:#3c4c60;transform:scaleX(0.9682);">Current</div>
<div class="t" style="left:873.80px;top:304.79px;font-size:6.6px;font-weight:400;color:#4a4a4a;transform:scaleX(0.9);">$201</div>
<div class="t" style="left:329.30px;top:316.99px;font-size:6.3px;font-weight:400;color:#222;transform:scaleX(0.9502);-webkit-text-stroke:0.18px #222">Value of Open Purchase Orders</div>
<div class="t" style="left:560.80px;top:316.93px;font-size:6.6px;font-weight:400;color:#3c4c60;transform:scaleX(0.8902);">This Year to Date <b style="color:#222">vs.</b> Last Year to Date</div>
<div class="t" style="left:873.80px;top:316.93px;font-size:6.6px;font-weight:400;color:#4a4a4a;transform:scaleX(0.9);">$1,103,444</div>
<div class="t" style="left:967.20px;top:316.93px;font-size:6.6px;font-weight:400;color:#4a4a4a;transform:scaleX(0.9);">$60,000</div>
<div class="t" style="left:1071.50px;top:316.97px;font-size:6.4px;font-weight:700;color:#222;transform:scaleX(0.95);">1,739.1%</div>
<div class="t" style="left:329.30px;top:329.13px;font-size:6.3px;font-weight:400;color:#222;transform:scaleX(0.9654);-webkit-text-stroke:0.18px #222">Value of Shipping Charges (2)</div>
<div class="t" style="left:560.80px;top:329.07px;font-size:6.6px;font-weight:400;color:#3c4c60;transform:scaleX(0.8902);">This Year to Date <b style="color:#222">vs.</b> Last Year to Date</div>
<div class="t" style="left:873.80px;top:329.07px;font-size:6.6px;font-weight:400;color:#4a4a4a;transform:scaleX(0.9);">$10,470</div>
<div class="t" style="left:967.20px;top:329.07px;font-size:6.6px;font-weight:400;color:#4a4a4a;transform:scaleX(0.9);">$2,428</div>
<div class="t" style="left:1071.50px;top:329.11px;font-size:6.4px;font-weight:700;color:#222;transform:scaleX(0.95);">331.2%</div>
<div class="t" style="left:329.30px;top:341.27px;font-size:6.3px;font-weight:400;color:#222;transform:scaleX(0.9634);-webkit-text-stroke:0.18px #222">Work Orders - Value of Completed</div>
<div class="t" style="left:560.80px;top:341.21px;font-size:6.6px;font-weight:400;color:#3c4c60;transform:scaleX(0.9200);">Last Month <b style="color:#222">vs.</b> Month Before Last</div>
<div class="t" style="left:873.80px;top:341.21px;font-size:6.6px;font-weight:400;color:#4a4a4a;transform:scaleX(0.9);">$94,830</div>
<div class="t" style="left:967.20px;top:341.21px;font-size:6.6px;font-weight:400;color:#4a4a4a;transform:scaleX(0.9);">$38,226</div>
<div class="t" style="left:1071.50px;top:341.25px;font-size:6.4px;font-weight:700;color:#222;transform:scaleX(0.95);">148.1%</div>
<div class="t" style="left:329.30px;top:353.41px;font-size:6.3px;font-weight:400;color:#222;transform:scaleX(0.9587);-webkit-text-stroke:0.18px #222">Drop Ship Total Sold Value</div>
<div class="t" style="left:560.80px;top:353.35px;font-size:6.6px;font-weight:400;color:#3c4c60;transform:scaleX(0.9200);">Last Month <b style="color:#222">vs.</b> Month Before Last</div>
<div class="t" style="left:873.80px;top:353.35px;font-size:6.6px;font-weight:400;color:#4a4a4a;transform:scaleX(0.9);">$149</div>
<div class="t" style="left:967.20px;top:353.35px;font-size:6.6px;font-weight:400;color:#4a4a4a;transform:scaleX(0.9);">$0</div>
<div class="t" style="left:1071.50px;top:353.39px;font-size:6.4px;font-weight:700;color:#222;transform:scaleX(0.95);">N/A</div>
<div class="t" style="left:314.50px;top:392.27px;font-size:7.5px;font-weight:700;color:#1e1e1e;transform:scaleX(0.8837);">Inventory By Period Trend</div>
<div class="t" style="left:318.00px;top:413.57px;font-size:6.6px;font-weight:400;color:#333;transform:scaleX(0.8673);">By Period</div>
<div class="t" style="left:318.70px;top:437.80px;font-size:6.0px;font-weight:400;color:#3a3a3a;transform:scaleX(0.9768);">7.00M</div>
<div class="t" style="left:318.70px;top:458.10px;font-size:6.0px;font-weight:400;color:#3a3a3a;transform:scaleX(0.9768);">6.00M</div>
<div class="t" style="left:318.70px;top:477.70px;font-size:6.0px;font-weight:400;color:#3a3a3a;transform:scaleX(0.9768);">5.00M</div>
<div class="t" style="left:318.70px;top:497.30px;font-size:6.0px;font-weight:400;color:#3a3a3a;transform:scaleX(0.9768);">4.00M</div>
<div class="t" style="left:318.70px;top:516.90px;font-size:6.0px;font-weight:400;color:#3a3a3a;transform:scaleX(0.9768);">3.00M</div>
<div class="t" style="left:318.70px;top:536.50px;font-size:6.0px;font-weight:400;color:#3a3a3a;transform:scaleX(0.9768);">2.00M</div>
<div class="t" style="left:318.70px;top:556.40px;font-size:6.0px;font-weight:400;color:#3a3a3a;transform:scaleX(0.9768);">1.00M</div>
</body></html>
